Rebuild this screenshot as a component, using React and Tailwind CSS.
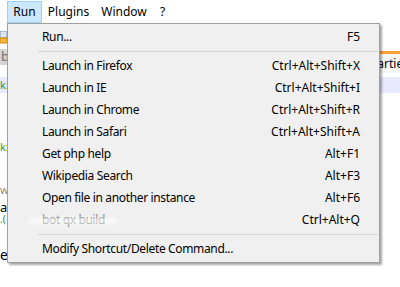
export default function App() {
  const font = { fontFamily: '"Noto Sans", "Open Sans", sans-serif' };
  const rows1 = [
    ["Launch in Firefox", "Ctrl+Alt+Shift+X"],
    ["Launch in IE", "Ctrl+Alt+Shift+I"],
    ["Launch in Chrome", "Ctrl+Alt+Shift+R"],
    ["Launch in Safari", "Ctrl+Alt+Shift+A"],
    ["Get php help", "Alt+F1"],
    ["Wikipedia Search", "Alt+F3"],
    ["Open file in another instance", "Alt+F6"],
  ];
  return (
    <div className="relative w-[400px] h-[287px] overflow-hidden bg-white text-[12px] text-black" style={font}>
      {/* menu bar */}
      <div className="flex h-[23px] items-start pl-[7px]">
        <div className="mt-[1px] flex h-[22px] w-[35px] items-center justify-center border border-[#99d1ff] bg-[#cce8ff]">Run</div>
        <div className="flex h-[23px] w-[53px] items-center justify-center">Plugins</div>
        <div className="flex h-[23px] w-[58px] items-center justify-center">Window</div>
        <div className="flex h-[23px] w-[19px] items-center justify-center">?</div>
      </div>
      {/* toolbar */}
      <div className="flex h-[25px] items-start bg-white pt-[8px]">
        <svg width="8" height="13" viewBox="0 0 8 13">
          <rect x="0" y="0" width="7" height="7" fill="#dfe6f0" stroke="#7f93b3" strokeWidth="1" />
          <rect x="0" y="7" width="7" height="5" fill="#f1b93c" stroke="#d08a10" strokeWidth="1" />
        </svg>
      </div>
      {/* tab bar */}
      <div className="flex h-[25px] items-start justify-between bg-white">
        <div className="mt-[1px] flex h-[16px] w-[30px] items-center bg-[#d4d4d4] pl-[1px] text-[13px] text-[#707070]">b</div>
        <div className="mt-[3px] flex h-[22px] w-[26px] items-start overflow-hidden border-t-[3px] border-[#f9a33b] bg-[#f7f7f7] pt-[1px]">
          <span className="-ml-[4px] whitespace-nowrap">Partie</span>
        </div>
      </div>
      {/* editor */}
      <div className="flex flex-col">
        <div className="h-[4px]" />
        <div className="flex h-[16px] items-center bg-[#e8e8ff] text-[11px] text-[#2e9a2e]">k:</div>
        <div className="h-[46px]" />
        <div className="flex h-[16px] items-center text-[11px] text-[#2e9a2e]">k:</div>
        <div className="h-[27px]" />
        <div className="flex h-[16px] items-center text-[11px] text-[#8a8a8a]">wi</div>
        <div className="h-[3px]" />
        <div className="flex h-[13px] items-center text-[13px] leading-[13px]">a:</div>
        <div className="flex h-[10px] items-center text-[10px] leading-[10px] text-[#1a8a3a]">.(</div>
        <div className="h-[22px]" />
        <div className="flex h-[16px] items-center text-[14px]">e<span className="text-[#2020c0]">]</span>;</div>
      </div>

      {/* dropdown */}
      <div className="absolute left-[7px] top-[23px] w-[373px] border border-[#a0a0a0] bg-[#f0f0f0] py-[2px] shadow-[2px_2px_2px_rgba(0,0,0,0.35)]">
        <div className="flex h-[22px] items-center justify-between pl-[34px] pr-[19px]">
          <span className="tracking-[-0.35px]">Run...</span>
          <span>F5</span>
        </div>
        <div className="flex h-[7px] items-center pl-[30px] pr-[1px]">
          <div className="h-[1px] w-full bg-[#d7d7d7]" />
        </div>
        {rows1.map(([a, b]) => (
          <div key={a} className="flex h-[22px] items-center justify-between pl-[34px] pr-[19px]">
            <span className="tracking-[-0.35px]">{a}</span>
            <span>{b}</span>
          </div>
        ))}
        <div className="relative flex h-[22px] items-center justify-between pl-[34px] pr-[19px]">
          <span className="tracking-[-0.35px] text-[#8a8a8a]">bot qx build</span>
          <span>Ctrl+Alt+Q</span>
          <div className="absolute left-[20px] top-[9px] h-[6px] w-[90px] rounded-full bg-white opacity-60 blur-[1.5px]" />
        </div>
        <div className="flex h-[7px] items-center pl-[30px] pr-[1px]">
          <div className="h-[1px] w-full bg-[#d7d7d7]" />
        </div>
        <div className="flex h-[22px] items-center justify-between pl-[34px] pr-[19px]">
          <span className="tracking-[-0.35px]">Modify Shortcut/Delete Command...</span>
        </div>
      </div>
    </div>
  );
}
